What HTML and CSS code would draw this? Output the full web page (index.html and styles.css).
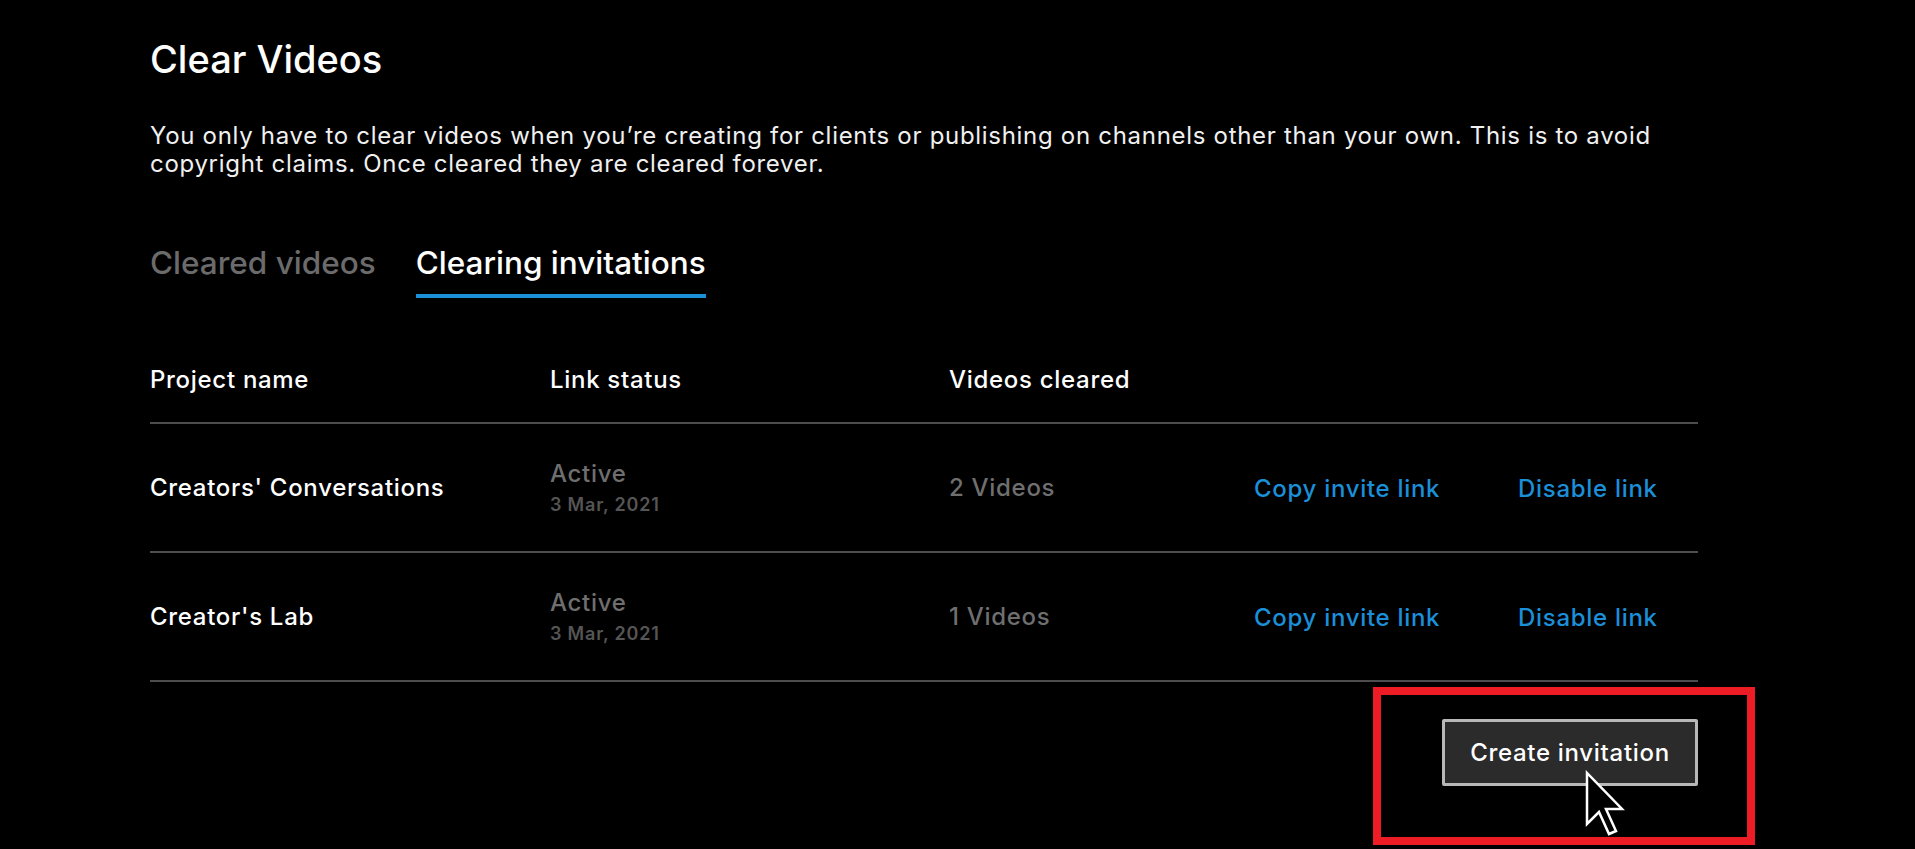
FILE: index.html
```html
<!DOCTYPE html>
<html>
<head>
  <meta charset="UTF-8">
  <title>Clear Videos</title>
  <link rel="stylesheet" href="styles.css">
</head>
<body>
  <div class="page">
    <h1 class="title">Clear Videos</h1>
    <p class="intro">You only have to clear videos when you’re creating for clients or publishing on channels other than your own. This is to avoid copyright claims. Once cleared they are cleared forever.</p>

    <div class="tabs">
      <div class="tab">Cleared videos</div>
      <div class="tab active">Clearing invitations</div>
    </div>

    <div class="table">
      <div class="row head">
        <div class="cell">Project name</div>
        <div class="cell">Link status</div>
        <div class="cell">Videos cleared</div>
        <div class="cell"></div>
        <div class="cell"></div>
      </div>
      <div class="row">
        <div class="cell name">Creators' Conversations</div>
        <div class="cell status">
          <span class="state">Active</span>
          <span class="date">3 Mar, 2021</span>
        </div>
        <div class="cell count">2 Videos</div>
        <div class="cell"><a class="link" href="#">Copy invite link</a></div>
        <div class="cell"><a class="link" href="#">Disable link</a></div>
      </div>
      <div class="row">
        <div class="cell name">Creator's Lab</div>
        <div class="cell status">
          <span class="state">Active</span>
          <span class="date">3 Mar, 2021</span>
        </div>
        <div class="cell count">1 Videos</div>
        <div class="cell"><a class="link" href="#">Copy invite link</a></div>
        <div class="cell"><a class="link" href="#">Disable link</a></div>
      </div>
    </div>

    <div class="actions">
      <div class="highlight"></div>
      <button class="create">Create invitation</button>
      <svg class="cursor" width="44" height="68" viewBox="0 0 44 68">
        <polygon points="3,3 3,54 15,42 25,64 32,61 22,39 38,39" fill="#000" stroke="#fff" stroke-width="2.5" stroke-linejoin="miter"/>
      </svg>
    </div>
  </div>
</body>
</html>
```

FILE: styles.css
```css
body {
  margin: 0;
  background-color: #000;
  font-family: Inter, "Noto Sans", sans-serif;
  color: #fff;
  height: 849px;
  overflow: hidden;
}

.page {
  width: 1548px;
  padding: 0 150px;
}

.title {
  font-size: 38px;
  font-weight: 500;
  line-height: 44px;
  margin: 37px 0 0;
}

.intro {
  font-size: 24px;
  letter-spacing: 0.7px;
  line-height: 28px;
  color: #f0f0f0;
  margin: 41px 0 0;
}

.tabs {
  display: flex;
  gap: 40px;
  margin-top: 67px;
}

.tab {
  font-size: 31.5px;
  font-weight: 500;
  line-height: 36px;
  color: #6b6b6b;
  padding-bottom: 13px;
  border-bottom: 4px solid transparent;
}

.tab.active {
  color: #fff;
  border-bottom-color: #1b8fd8;
}

.table {
  margin-top: 68px;
}

.row {
  display: grid;
  grid-template-columns: 400px 399px 305px 264px 1fr;
  align-items: center;
  height: 127px;
  border-bottom: 2px solid #4d4d4d;
}

.row.head {
  height: auto;
  align-items: start;
  padding-bottom: 28px;
}

.cell {
  font-size: 24px;
  letter-spacing: 0.7px;
  line-height: 28px;
  font-weight: 500;
}

.status {
  display: flex;
  flex-direction: column;
}

.state,
.count {
  color: #6f6f6f;
}

.date {
  font-size: 18px;
  letter-spacing: 0.8px;
  line-height: 22px;
  font-weight: 600;
  color: #555;
  margin-top: 6px;
}

.link {
  color: #1b8fd8;
  text-decoration: none;
  display: inline-block;
  margin-top: 3px;
}

.actions {
  position: relative;
  display: flex;
  justify-content: flex-end;
  padding-top: 37px;
}

.create {
  width: 256px;
  height: 67px;
  background-color: #2b2b2b;
  border: 3px solid #b8b8b8;
  border-radius: 2px;
  color: #fff;
  font-family: inherit;
  font-size: 24px;
  letter-spacing: 0.7px;
  font-weight: 500;
}

.highlight {
  position: absolute;
  top: 5px;
  left: 1223px;
  width: 366px;
  height: 142px;
  border: 8px solid #ee1c25;
}

.cursor {
  position: absolute;
  top: 88px;
  left: 1434px;
}
```
